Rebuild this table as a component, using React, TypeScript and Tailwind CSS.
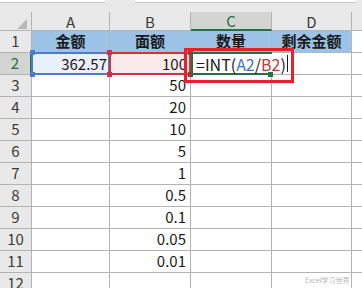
import React from "react";

const cols = ["A", "B", "C", "D"];
const heads = ["金额", "面额", "数量", "剩余金额"];
const faces = ["50", "20", "10", "5", "1", "0.5", "0.1", "0.05", "0.01"];

const line = "border-r border-b border-[#b3b3b3]";
const hdr = "bg-[#e9e9e9] text-[#3a3a3a]";

function Corner({ color, pos }: { color: string; pos: string }) {
  return <span className={`absolute w-[5px] h-[5px] ${color} ${pos}`} />;
}

export default function App() {
  return (
    <div className="relative w-[362px] h-[288px] overflow-hidden bg-[#e9e9e9] font-['Noto_Sans_CJK_SC',sans-serif] text-[15px] text-[#1a1a1a]">
      {/* formula bar remnants */}
      <div className="flex h-[12px] gap-[30px] pr-[6px]">
        <div className="w-[105px] h-[3px] bg-white border-b border-[#c8c8c8]" />
        <div className="flex-1 h-[3px] bg-white border-b border-[#c8c8c8]" />
      </div>

      <div className="grid grid-cols-[32px_78px_81px_81px_80px_10px]">
        {/* column headers */}
        <div className={`${hdr} ${line} h-[19px] relative`}>
          <svg className="absolute left-[17px] top-[7px]" width="10" height="10" viewBox="0 0 10 10">
            <polygon points="10,0 10,10 0,10" fill="#b9b9b9" />
          </svg>
        </div>
        {cols.map((c) =>
          c === "C" ? (
            <div
              key={c}
              className="h-[19px] flex items-center justify-center bg-[#d4d4d4] text-[#217346] border-r border-[#b3b3b3] border-b-2 border-b-[#217346] leading-none"
            >
              {c}
            </div>
          ) : (
            <div key={c} className={`${hdr} ${line} h-[19px] flex items-center justify-center leading-none`}>
              {c}
            </div>
          )
        )}
        <div className={`${hdr} border-b border-[#b3b3b3] h-[19px]`} />

        {/* row 1 */}
        <div className={`${hdr} ${line} h-[22px] flex items-center justify-center`}>1</div>
        {heads.map((h) => (
          <div
            key={h}
            className="h-[22px] bg-[#9cc3e6] border-r border-b border-[#aab9c8] flex items-center justify-center font-bold"
          >
            {h}
          </div>
        ))}
        <div className="h-[22px] bg-white border-b border-[#b3b3b3]" />

        {/* row 2 */}
        <div className="h-[22px] bg-[#d4d4d4] text-[#217346] border-b border-[#b3b3b3] border-r-2 border-r-[#217346] flex items-center justify-center">
          2
        </div>
        <div className="relative h-[22px] bg-[#eaf0f9] flex items-center justify-end pr-[3px]">
          362.57
          <div className="absolute -left-[1px] -top-[1px] right-0 bottom-0 border-2 border-[#4a7bcf]" />
          <Corner color="bg-[#4a7bcf]" pos="-left-[2px] -top-[3px]" />
          <Corner color="bg-[#4a7bcf]" pos="-left-[2px] -bottom-[2px]" />
        </div>
        <div className="relative h-[22px] bg-[#fbeaea] flex items-center justify-end pr-[4px]">
          100
          <div className="absolute -left-[1px] -top-[1px] right-0 bottom-0 border-2 border-[#c9373d]" />
          <Corner color="bg-[#c9373d]" pos="-left-[3px] -top-[3px]" />
          <Corner color="bg-[#c9373d]" pos="-left-[3px] -bottom-[2px]" />
          <Corner color="bg-[#a8323a]" pos="-right-[2px] -top-[3px]" />
          <Corner color="bg-[#a8323a]" pos="-right-[2px] -bottom-[2px]" />
        </div>
        <div className="relative z-10 h-[22px]">
          <div className="absolute left-0 -top-[1px] w-[81px] h-[23px] bg-white border-l-2 border-t-2 border-b-2 border-[#217346]" />
          <div className="absolute left-[2px] top-[1px] w-[95px] h-[19px] bg-white flex items-center pl-[3px] whitespace-nowrap text-[16px]">
            <span>=INT(</span>
            <span className="text-[#3f72c6]">A2</span>
            <span>/</span>
            <span className="text-[#c9373d]">B2</span>
            <span>)</span>
            <span className="ml-[1px] w-px h-[17px] bg-[#1a1a1a]" />
          </div>
          <Corner color="bg-[#217346]" pos="left-[77px] -bottom-[2px]" />
        </div>
        <div className={`h-[22px] bg-white ${line}`} />
        <div className="h-[22px] bg-white border-b border-[#b3b3b3]" />

        {/* rows 3-11 */}
        {faces.map((v, i) => (
          <React.Fragment key={v}>
            <div className={`${hdr} ${line} h-[22px] flex items-center justify-center`}>{i + 3}</div>
            <div className={`h-[22px] bg-white ${line}`} />
            <div className={`h-[22px] bg-white ${line} flex items-center justify-end pr-[4px]`}>{v}</div>
            <div className={`h-[22px] bg-white ${line}`} />
            <div className={`h-[22px] bg-white ${line}`} />
            <div className="h-[22px] bg-white border-b border-[#b3b3b3]" />
          </React.Fragment>
        ))}

        {/* row 12 */}
        <div className={`${hdr} ${line} h-[22px] flex items-center justify-center`}>12</div>
        <div className={`h-[22px] bg-white ${line}`} />
        <div className={`h-[22px] bg-white ${line}`} />
        <div className={`h-[22px] bg-white ${line}`} />
        <div className={`h-[22px] bg-white ${line}`} />
        <div className="h-[22px] bg-white" />
      </div>

      {/* annotation box */}
      <div className="absolute left-[184px] top-[48px] w-[110px] h-[35px] border-[3px] border-[#e8202a] z-20" />

      {/* watermark */}
      <div className="absolute left-[305px] top-[277px] text-[7px] leading-none text-[#b5b5b5] whitespace-nowrap">
        Excel学习世界
      </div>
    </div>
  );
}
